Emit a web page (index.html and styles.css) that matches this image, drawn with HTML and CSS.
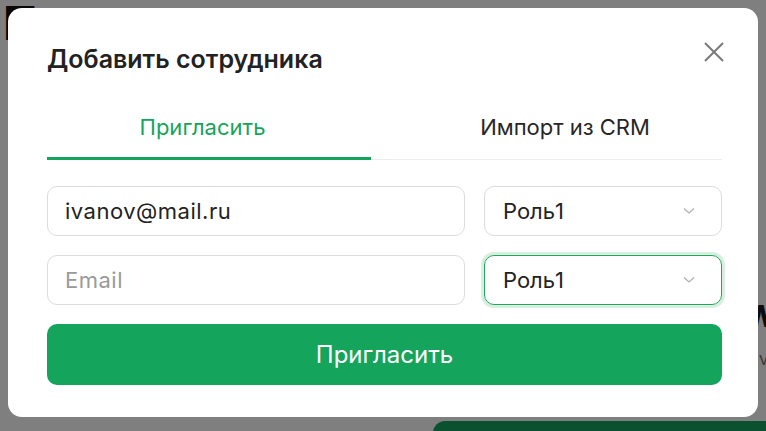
FILE: index.html
```html
<!DOCTYPE html>
<html lang="ru">
<head>
    <meta charset="UTF-8">
    <meta name="viewport" content="width=device-width, initial-scale=1.0">
    <title>Добавить сотрудника</title>
    <link rel="stylesheet" href="styles.css">
</head>
<body>
    <!-- страница под модальным окном -->
    <div class="page">
        <h1 class="page-title">Персонал</h1>
        <div class="page-side">
            <div class="side-title">Welcome</div>
            <div class="side-text">Overview</div>
        </div>
        <div class="page-footer">
            <button class="page-btn">Добавить</button>
        </div>
    </div>

    <div class="overlay">
        <div class="modal">
            <div class="modal-head">
                <h2 class="modal-title">Добавить сотрудника</h2>
                <button class="close-btn" aria-label="Закрыть">
                    <svg width="22" height="22" viewBox="0 0 22 22">
                        <path d="M2 2 L20 20 M20 2 L2 20" stroke="#7a7a7a" stroke-width="2" fill="none"/>
                    </svg>
                </button>
            </div>

            <div class="tabs">
                <div class="tab tab-invite active">Пригласить</div>
                <div class="tab tab-import">Импорт из CRM</div>
            </div>

            <form class="invite-form">
                <div class="row">
                    <input class="field" type="text" value="ivanov@mail.ru">
                    <div class="select">
                        <span>Роль1</span>
                        <svg width="12" height="8" viewBox="0 0 12 8"><path d="M1 1.5 L6 6 L11 1.5" stroke="#b0b0b0" stroke-width="1.3" fill="none"/></svg>
                    </div>
                </div>
                <div class="row">
                    <input class="field" type="text" placeholder="Email">
                    <div class="select focused">
                        <span>Роль1</span>
                        <svg width="12" height="8" viewBox="0 0 12 8"><path d="M1 1.5 L6 6 L11 1.5" stroke="#b0b0b0" stroke-width="1.3" fill="none"/></svg>
                    </div>
                </div>
                <button type="button" class="submit-btn">Пригласить</button>
            </form>
        </div>
    </div>
</body>
</html>
```

FILE: styles.css
```css
/* Reset */
* {
    box-sizing: border-box;
}

body {
    font-family: Inter, "Noto Sans", sans-serif;
    background-color: #fff;
    margin: 0;
    height: 431px;
    overflow: hidden;
}

/* страница за оверлеем */
.page {
    display: grid;
    grid-template-columns: 745px 1fr;
    grid-template-rows: 290px 131px 1fr;
    height: 431px;
}

.page-title {
    margin: 0;
    padding: 0 0 0 3px;
    font-size: 46px;
    line-height: 46px;
    color: #111;
    grid-row: 1 / 3;
    white-space: nowrap;
}

.page-side {
    grid-column: 2;
    grid-row: 2;
    padding-top: 8px;
    white-space: nowrap;
}

.side-title {
    font-size: 30px;
    font-weight: 800;
    color: #1a1a1a;
}

.side-text {
    margin-top: 14px;
    font-size: 18px;
    color: #777;
}

.page-footer {
    grid-column: 1 / 3;
    grid-row: 3;
    padding-left: 433px;
}

.page-btn {
    width: 100%;
    height: 40px;
    border: none;
    border-radius: 12px 0 0 0;
    background: #14a45f;
    color: #fff;
}

/* модальное окно */
.overlay {
    position: fixed;
    inset: 0;
    background: rgba(0, 0, 0, 0.5);
    padding: 8px;
}

.modal {
    width: 750px;
    height: 409px;
    background: #fff;
    border-radius: 14px;
    padding: 37px 36px 32px 39px;
}

.modal-head {
    display: flex;
    justify-content: space-between;
    align-items: center;
}

.modal-title {
    margin: 0;
    font-size: 25px;
    line-height: 28px;
    font-weight: 600;
    color: #222;
}

.close-btn {
    border: none;
    background: none;
    padding: 0;
    margin-top: -12px;
    margin-right: -3px;
    cursor: pointer;
}

.tabs {
    display: flex;
    margin-top: 24px;
    border-bottom: 1px solid #ececec;
}

.tab {
    text-align: center;
    padding: 16px 0;
    font-size: 22px;
    line-height: 28px;
    color: #262626;
    border-bottom: 3px solid transparent;
    margin-bottom: -1px;
}

.tab-invite {
    width: 324px;
    padding-right: 13px;
}

.tab-import {
    flex: 1;
    padding-left: 37px;
}

.tab.active {
    color: #14a45b;
    border-bottom-color: #14a45b;
}

.invite-form {
    margin-top: 26px;
    display: flex;
    flex-direction: column;
    gap: 19px;
}

.row {
    display: grid;
    grid-template-columns: 1fr 238px;
    gap: 19px;
}

.field,
.select {
    height: 50px;
    border: 1px solid #dcdcdc;
    border-radius: 10px;
    font-family: inherit;
    font-size: 22px;
    color: #222;
}

.field {
    padding: 0 17px;
    letter-spacing: 0.5px;
    outline: none;
}

.field::placeholder {
    color: #9a9a9a;
}

.select {
    display: flex;
    align-items: center;
    justify-content: space-between;
    padding: 0 26px 0 18px;
}

.select.focused {
    border-color: #22a55e;
    box-shadow: 0 0 0 3px #d8eedf;
}

.submit-btn {
    height: 61px;
    border: none;
    border-radius: 10px;
    background: #14a45b;
    color: #fff;
    font-family: inherit;
    font-size: 24px;
    cursor: pointer;
}
```
